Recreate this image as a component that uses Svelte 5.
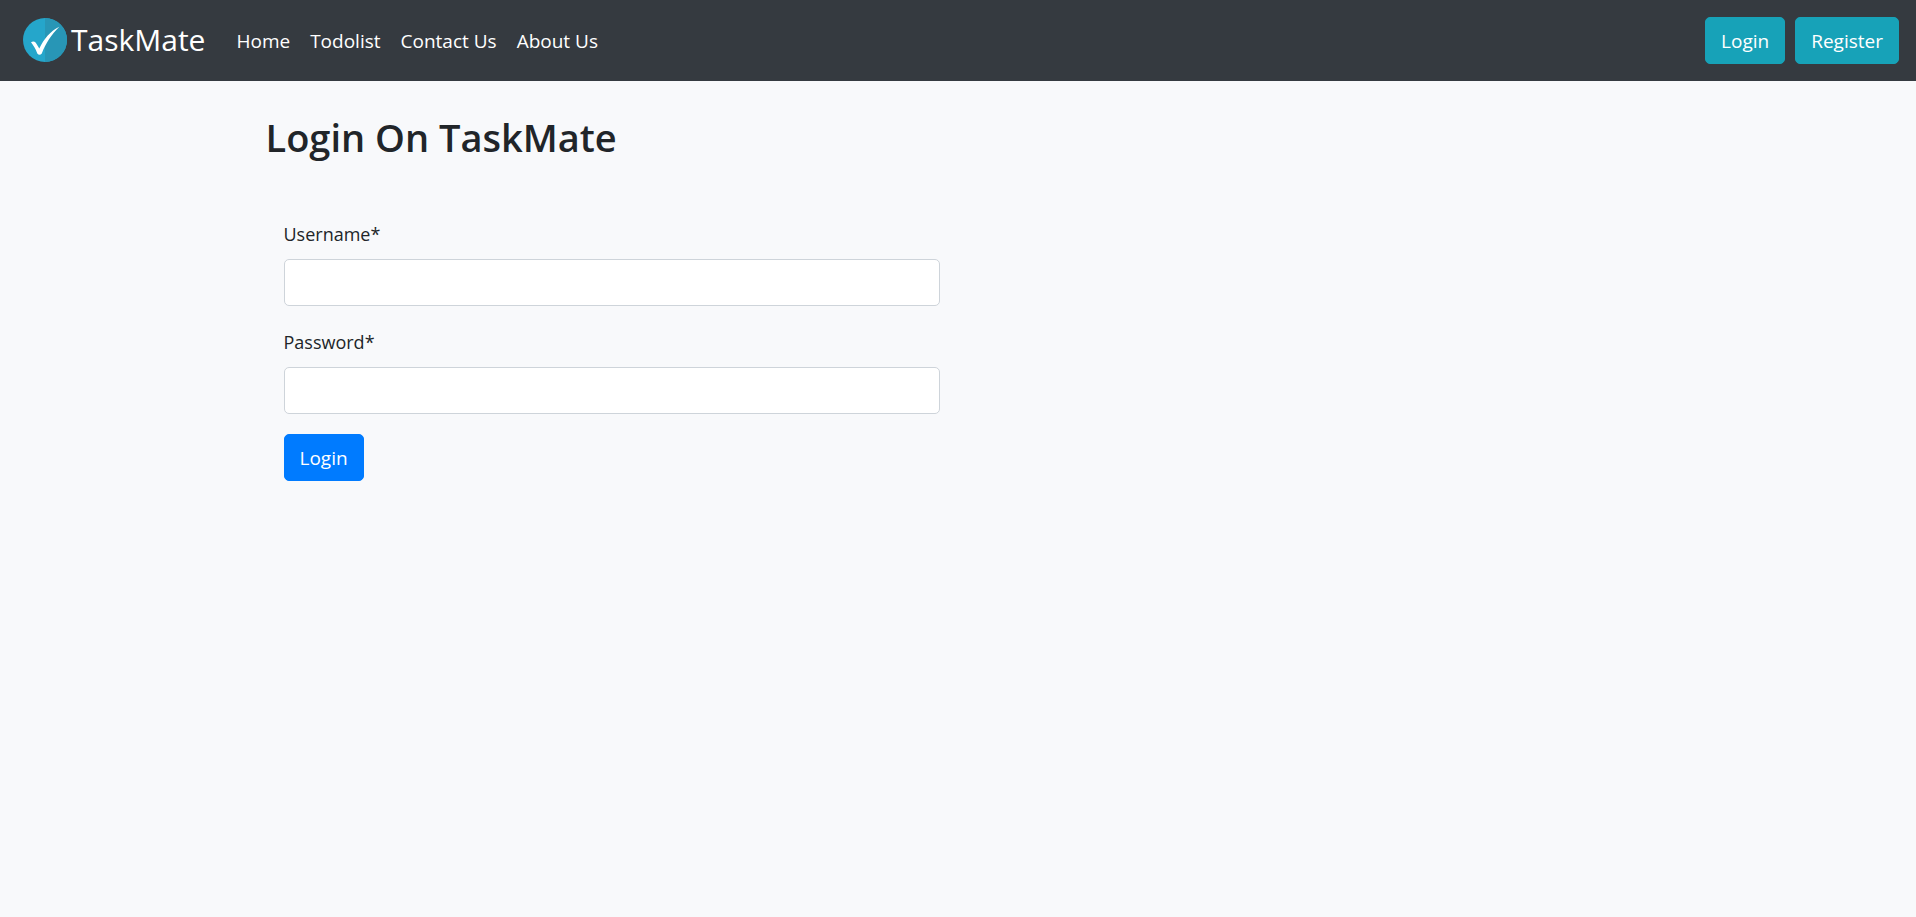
<script>
  const links = ['Home', 'Todolist', 'Contact Us', 'About Us'];
  let username = $state('');
  let password = $state('');
</script>

<header class="navbar">
  <a class="brand" href="#home">
    <svg class="mark" viewBox="0 0 44 44" aria-hidden="true">
      <circle cx="22" cy="22" r="22" fill="#25a6cb" />
      <path d="M22 0a22 22 0 0 1 0 44z" fill="#2896b6" />
      <path d="M8 24.300Q10.500 22.300 12.800 24.700L16.300 30.500C21 20.500 27.500 13 36.300 8.700C28.500 16.500 22.500 25.500 18.800 35.500Q16.500 38 14.300 35.500C12.500 30.500 10.500 27.500 8 24.300Z" fill="#fff" />
    </svg>
    <span>TaskMate</span>
  </a>
  <nav>
    {#each links as link}
      <a href="#{link.toLowerCase().replace(' ', '-')}">{link}</a>
    {/each}
  </nav>
  <div class="actions">
    <a class="btn info" href="#login">Login</a>
    <a class="btn info" href="#register">Register</a>
  </div>
</header>

<main>
  <h1>Login On TaskMate</h1>
  <form onsubmit={(e) => e.preventDefault()}>
    <label for="username">Username*</label>
    <input id="username" type="text" autocomplete="username" bind:value={username} />
    <label for="password">Password*</label>
    <input id="password" type="password" autocomplete="current-password" bind:value={password} />
    <button class="btn primary" type="submit">Login</button>
  </form>
</main>

<style>
  :global(body) {
    margin: 0;
    background: #f8f9fb;
    color: #212529;
    font: 400 19px/32px "Segoe UI", "Open Sans", sans-serif;
  }
  * {
    box-sizing: border-box;
  }
  a {
    color: #fff;
    text-decoration: none;
  }
  .navbar {
    display: flex;
    align-items: center;
    height: 81px;
    padding: 0 17px 0 23px;
    background: #353a40;
  }
  .brand {
    display: flex;
    align-items: center;
    gap: 4px;
    margin-right: 21px;
    padding-bottom: 1px;
    font-size: 30px;
    line-height: 44px;
  }
  .mark {
    width: 44px;
    height: 44px;
  }
  nav {
    display: flex;
    flex: 1;
  }
  nav a {
    padding: 10px;
  }
  .actions {
    display: flex;
    gap: 10px;
  }
  .btn {
    height: 47px;
    padding: 7px 15px;
    border: 1px solid;
    border-radius: 5px;
    color: #fff;
    font: inherit;
    cursor: pointer;
  }
  .info {
    background: #17a2b8;
    border-color: #17a2b8;
  }
  .primary {
    align-self: flex-start;
    background: #007bff;
    border-color: #007bff;
  }
  main {
    max-width: 1425px;
    margin: 0 auto;
    padding: 32px 20px;
  }
  h1 {
    margin: 0 0 57px;
    font-size: 38px;
    line-height: 48px;
    font-weight: 600;
  }
  form {
    display: flex;
    flex-direction: column;
    width: 50%;
    padding: 0 18px;
  }
  label {
    margin-bottom: 9px;
    font-size: 18px;
  }
  input {
    height: 47px;
    margin-bottom: 20px;
    padding: 8px 15px;
    border: 1px solid #ced4da;
    border-radius: 5px;
    background: #fff;
    color: #495057;
    font: inherit;
  }
</style>
